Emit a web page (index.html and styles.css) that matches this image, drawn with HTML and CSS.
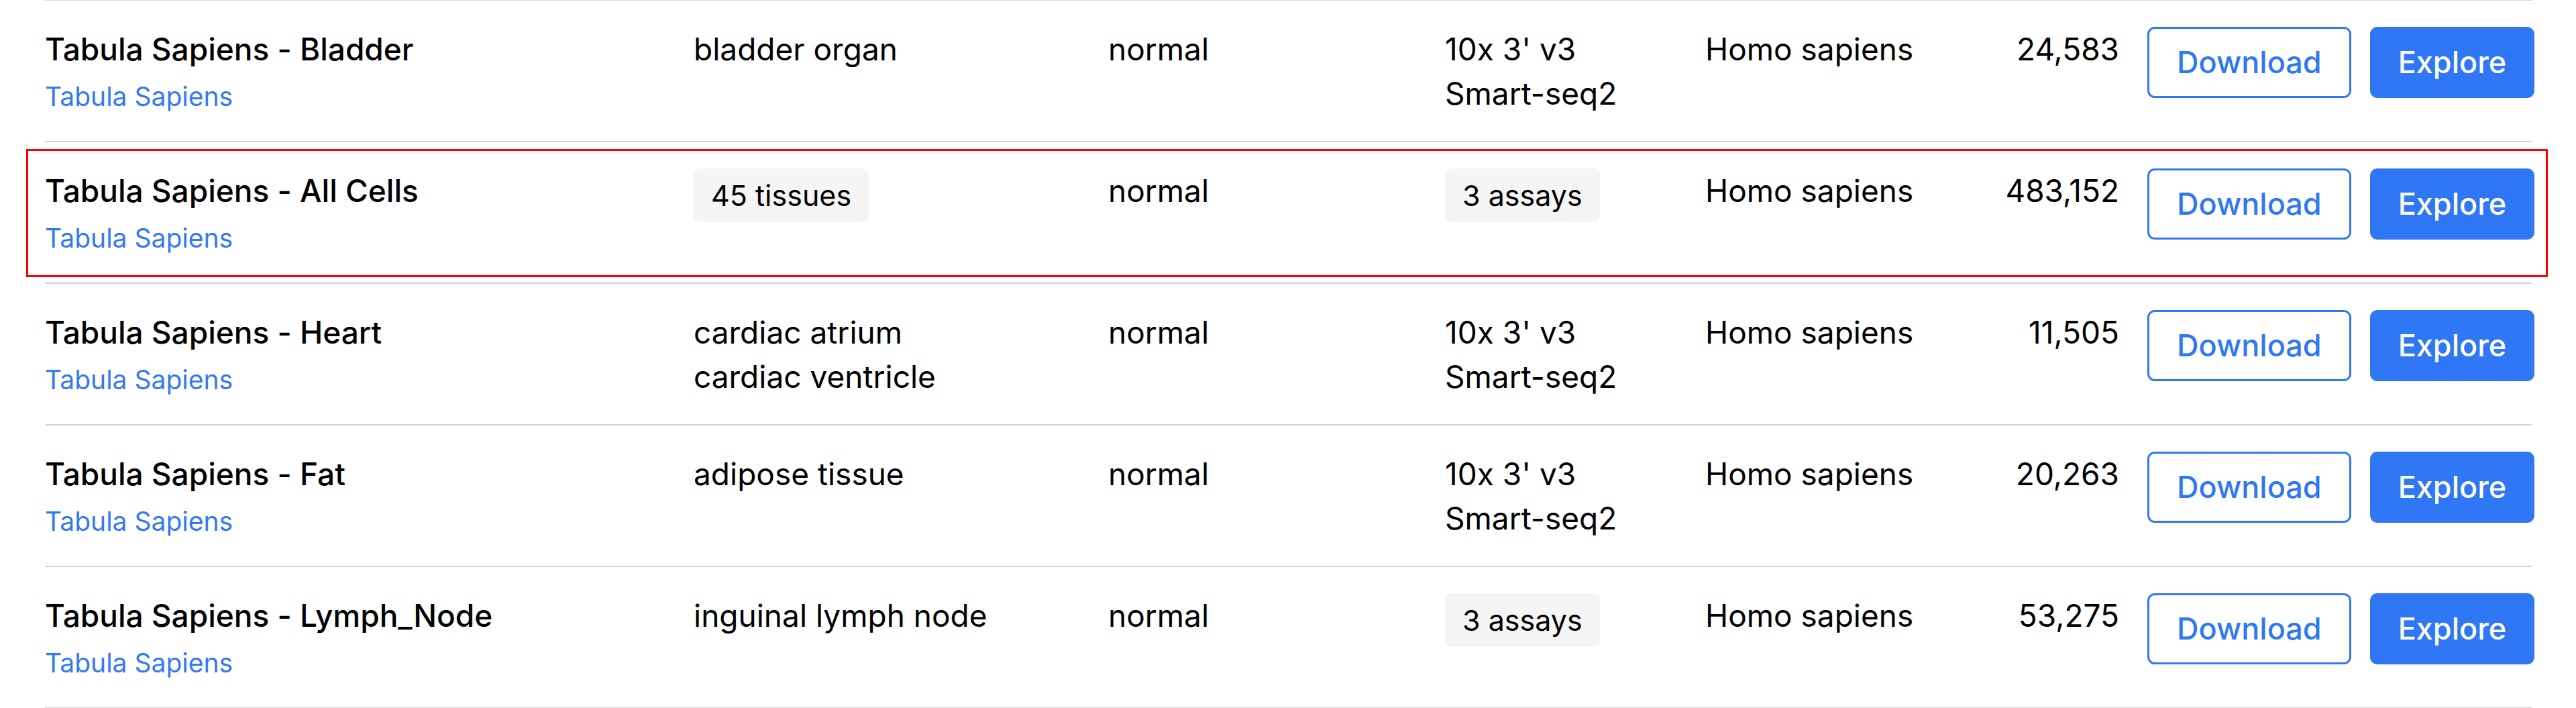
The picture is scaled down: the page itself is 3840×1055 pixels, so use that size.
FILE: index.html
```html
<!DOCTYPE html>
<html lang="en">
<head>
<meta charset="utf-8">
<title>Datasets</title>
<link rel="stylesheet" href="styles.css">
</head>
<body>
<div class="table">
  <div class="row">
    <div class="cell name">
      <div class="title">Tabula Sapiens - Bladder</div>
      <a class="collection" href="#">Tabula Sapiens</a>
    </div>
    <div class="cell"><div>bladder organ</div></div>
    <div class="cell"><div>normal</div></div>
    <div class="cell"><div>10x 3' v3</div><div>Smart-seq2</div></div>
    <div class="cell"><div>Homo sapiens</div></div>
    <div class="cell count">24,583</div>
    <div class="actions"><button class="btn btn-outline">Download</button><button class="btn btn-primary">Explore</button></div>
  </div>
  <div class="row highlighted">
    <div class="cell name">
      <div class="title">Tabula Sapiens - All Cells</div>
      <a class="collection" href="#">Tabula Sapiens</a>
    </div>
    <div class="cell"><span class="pill">45 tissues</span></div>
    <div class="cell"><div>normal</div></div>
    <div class="cell"><span class="pill">3 assays</span></div>
    <div class="cell"><div>Homo sapiens</div></div>
    <div class="cell count">483,152</div>
    <div class="actions"><button class="btn btn-outline">Download</button><button class="btn btn-primary">Explore</button></div>
  </div>
  <div class="row">
    <div class="cell name">
      <div class="title">Tabula Sapiens - Heart</div>
      <a class="collection" href="#">Tabula Sapiens</a>
    </div>
    <div class="cell"><div>cardiac atrium</div><div>cardiac ventricle</div></div>
    <div class="cell"><div>normal</div></div>
    <div class="cell"><div>10x 3' v3</div><div>Smart-seq2</div></div>
    <div class="cell"><div>Homo sapiens</div></div>
    <div class="cell count">11,505</div>
    <div class="actions"><button class="btn btn-outline">Download</button><button class="btn btn-primary">Explore</button></div>
  </div>
  <div class="row">
    <div class="cell name">
      <div class="title">Tabula Sapiens - Fat</div>
      <a class="collection" href="#">Tabula Sapiens</a>
    </div>
    <div class="cell"><div>adipose tissue</div></div>
    <div class="cell"><div>normal</div></div>
    <div class="cell"><div>10x 3' v3</div><div>Smart-seq2</div></div>
    <div class="cell"><div>Homo sapiens</div></div>
    <div class="cell count">20,263</div>
    <div class="actions"><button class="btn btn-outline">Download</button><button class="btn btn-primary">Explore</button></div>
  </div>
  <div class="row">
    <div class="cell name">
      <div class="title">Tabula Sapiens - Lymph_Node</div>
      <a class="collection" href="#">Tabula Sapiens</a>
    </div>
    <div class="cell"><div>inguinal lymph node</div></div>
    <div class="cell"><div>normal</div></div>
    <div class="cell"><span class="pill">3 assays</span></div>
    <div class="cell"><div>Homo sapiens</div></div>
    <div class="cell count">53,275</div>
    <div class="actions"><button class="btn btn-outline">Download</button><button class="btn btn-primary">Explore</button></div>
  </div>
</div>
</body>
</html>
```
FILE: styles.css
```css
html, body {
  margin: 0;
  padding: 0;
  background: #ffffff;
}

body {
  font-family: Inter, "Noto Sans", "Liberation Sans", sans-serif;
  font-size: 46px;
  line-height: 66px;
  color: #000000;
  font-feature-settings: "calt" 0;
}

.table {
  margin: -1px 65px 0 67px;
  border-top: 2px solid #d4d4d4;
}

.row {
  position: relative;
  display: grid;
  grid-template-columns: 967px 618px 502px 388px 380px 237px auto;
  align-items: start;
  padding: 39px 0 38px;
  border-bottom: 2px solid #d4d4d4;
}

.highlighted::after {
  content: "";
  position: absolute;
  top: 10px;
  bottom: 8px;
  left: -28px;
  right: -23px;
  border: 3px solid #ff0000;
  pointer-events: none;
}

.cell {
  min-width: 0;
}

.title {
  font-size: 46px;
  font-weight: 500;
  line-height: 66px;
}

.collection {
  display: block;
  margin-top: 10px;
  font-size: 39px;
  line-height: 56px;
  color: #3378f4;
  text-decoration: none;
}

.pill {
  display: inline-block;
  padding: 7px 26px;
  font-size: 43px;
  background: #f5f5f5;
  border-radius: 10px;
}

.count {
  text-align: right;
}

.actions {
  display: flex;
  gap: 28px;
  margin-left: 42px;
}

.btn {
  font-family: Inter, "Noto Sans", "Liberation Sans", sans-serif;
  font-feature-settings: "calt" 0;
  font-size: 45px;
  font-weight: 500;
  line-height: 66px;
  padding: 17px 41px;
  border: 3px solid #2f77f4;
  border-radius: 11px;
  cursor: pointer;
}

.btn-outline {
  background: #ffffff;
  color: #2f77f4;
}

.btn-primary {
  background: #2f77f4;
  color: #ffffff;
  padding-left: 39px;
  padding-right: 39px;
}
```
